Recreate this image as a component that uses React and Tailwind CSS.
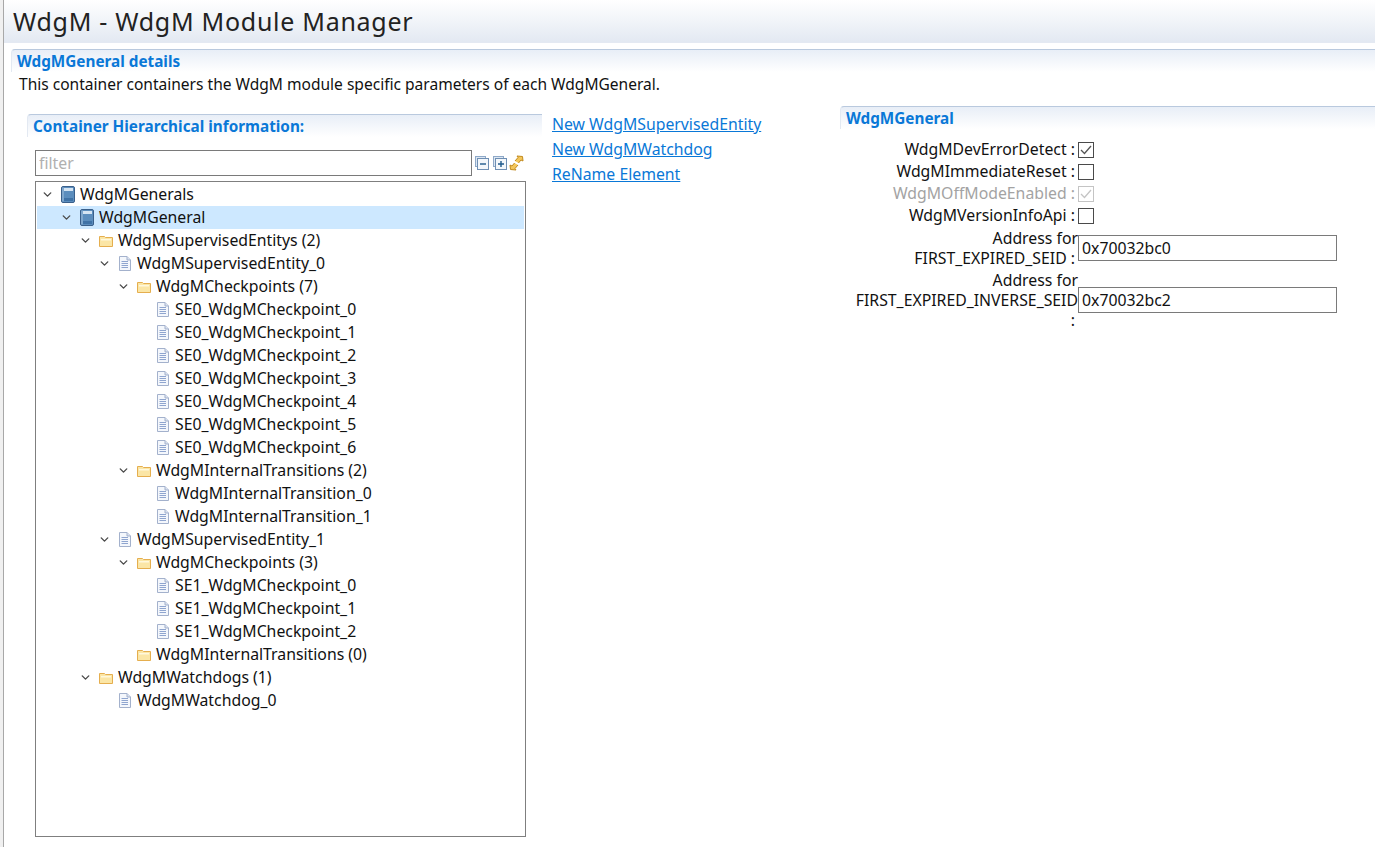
import { ChevronDown } from 'lucide-react';

const FONT = "font-['Noto_Sans','Open_Sans',sans-serif]";

const tree = [
  { depth: 0, label: 'WdgMGenerals', icon: 'book', open: true },
  { depth: 1, label: 'WdgMGeneral', icon: 'book', open: true, selected: true },
  { depth: 2, label: 'WdgMSupervisedEntitys (2)', icon: 'folder', open: true },
  { depth: 3, label: 'WdgMSupervisedEntity_0', icon: 'doc', open: true },
  { depth: 4, label: 'WdgMCheckpoints (7)', icon: 'folder', open: true },
  { depth: 5, label: 'SE0_WdgMCheckpoint_0', icon: 'doc' },
  { depth: 5, label: 'SE0_WdgMCheckpoint_1', icon: 'doc' },
  { depth: 5, label: 'SE0_WdgMCheckpoint_2', icon: 'doc' },
  { depth: 5, label: 'SE0_WdgMCheckpoint_3', icon: 'doc' },
  { depth: 5, label: 'SE0_WdgMCheckpoint_4', icon: 'doc' },
  { depth: 5, label: 'SE0_WdgMCheckpoint_5', icon: 'doc' },
  { depth: 5, label: 'SE0_WdgMCheckpoint_6', icon: 'doc' },
  { depth: 4, label: 'WdgMInternalTransitions (2)', icon: 'folder', open: true },
  { depth: 5, label: 'WdgMInternalTransition_0', icon: 'doc' },
  { depth: 5, label: 'WdgMInternalTransition_1', icon: 'doc' },
  { depth: 3, label: 'WdgMSupervisedEntity_1', icon: 'doc', open: true },
  { depth: 4, label: 'WdgMCheckpoints (3)', icon: 'folder', open: true },
  { depth: 5, label: 'SE1_WdgMCheckpoint_0', icon: 'doc' },
  { depth: 5, label: 'SE1_WdgMCheckpoint_1', icon: 'doc' },
  { depth: 5, label: 'SE1_WdgMCheckpoint_2', icon: 'doc' },
  { depth: 4, label: 'WdgMInternalTransitions (0)', icon: 'folder' },
  { depth: 2, label: 'WdgMWatchdogs (1)', icon: 'folder', open: true },
  { depth: 3, label: 'WdgMWatchdog_0', icon: 'doc' },
];

const BookIcon = () => (
  <svg width="14" height="17" viewBox="0 0 14 17">
    <rect x="0.5" y="0.5" width="13" height="16" rx="1.5" fill="#5b8dbd" stroke="#3a5f8a" />
    <rect x="3" y="2" width="9" height="3" fill="#d5e4f2" />
    <rect x="1.5" y="1.5" width="1" height="14" fill="#a3c2de" />
    <rect x="3" y="12" width="9" height="3" fill="#3f72a6" />
  </svg>
);

const FolderIcon = () => (
  <svg width="14" height="12" viewBox="0 0 14 12">
    <path d="M0.5 1.5 H5.5 L6.5 2.5 H13.5 V11.5 H0.5 Z" fill="#fbe6a6" stroke="#e5ae4e" />
    <rect x="2" y="4" width="10" height="1.5" fill="#fff8dc" />
  </svg>
);

const DocIcon = () => (
  <svg width="12" height="15" viewBox="0 0 12 15">
    <path d="M0.5 0.5 H8 L11.5 4 V14.5 H0.5 Z" fill="#f4f7fc" stroke="#a3b1cc" />
    <path d="M8 0.5 V4 H11.5" fill="#dbe3f1" stroke="#a3b1cc" />
    <path d="M2.5 5.5 H9 M2.5 7.5 H9 M2.5 9.5 H9 M2.5 11.5 H9" stroke="#8fa5cf" />
  </svg>
);

const icons = { book: <BookIcon />, folder: <FolderIcon />, doc: <DocIcon /> };

const TreeRow = ({ node }) => (
  <div
    className={`flex h-[23px] items-center ${node.selected ? 'bg-[#cde8ff]' : ''}`}
    style={{ paddingLeft: 5 + node.depth * 19 }}
  >
    <span className="flex w-[10px] justify-center">
      {node.open && <ChevronDown size={13} strokeWidth={2.6} className="shrink-0 text-[#4a4a4a]" />}
    </span>
    <span className="ml-[9px] flex w-[14px] justify-center">{icons[node.icon]}</span>
    <span className="ml-[5px] whitespace-nowrap text-[#111111]">{node.label}</span>
  </div>
);

const ToolbarIcons = () => (
  <div className="ml-[3px] flex items-center gap-[4px]">
    <svg width="14" height="14" viewBox="0 0 14 14">
      <rect x="0.5" y="0.5" width="10" height="10" fill="#dce7f3" stroke="#8fa9c8" />
      <rect x="2.5" y="2.5" width="11" height="11" fill="#f3f7fb" stroke="#6f8fb3" />
      <path d="M5 8 H11" stroke="#1f5a8c" strokeWidth="1.4" />
    </svg>
    <svg width="14" height="14" viewBox="0 0 14 14">
      <rect x="0.5" y="0.5" width="10" height="10" fill="#dce7f3" stroke="#8fa9c8" />
      <rect x="2.5" y="2.5" width="11" height="11" fill="#f3f7fb" stroke="#6f8fb3" />
      <path d="M5 8 H11 M8 5 V11" stroke="#1f5a8c" strokeWidth="1.4" />
    </svg>
    <svg width="15" height="16" viewBox="0 0 15 16" className="-ml-[2px]">
      <path d="M6 6 L9 2.5 L8 1 L13.5 1.5 L14 6 L12 5 L9.5 8" fill="#f3c65a" stroke="#c28a1e" />
      <path d="M9 10 L6 13.5 L7 15 L1.5 14.5 L1 10 L3 11 L5.5 8" fill="#f3c65a" stroke="#c28a1e" />
    </svg>
  </div>
);

const Section = ({ title, className, children }) => (
  <section className={className}>
    <div className="h-[23px] rounded-tl-[4px] border-t border-l border-t-[#b9c9de] border-l-[#e3e9f2] bg-gradient-to-b from-[#e8eef7] to-white">
      <h2 className="pl-[5px] text-[15.3px] font-bold leading-[22px] text-[#0a78d7]">{title}</h2>
    </div>
    {children}
  </section>
);

const CheckRow = ({ label, checked, disabled }) => (
  <div className="flex h-[22px] items-center justify-end">
    <span className={`mr-[3px] whitespace-nowrap ${disabled ? 'text-[#a3a3a3]' : 'text-[#111111]'}`}>{label} :</span>
    <span
      className={`mr-[281px] flex h-[16px] w-[16px] items-center justify-center border bg-white ${
        disabled ? 'border-[#c4c4c4]' : 'border-[#4a4a4a]'
      }`}
    >
      {checked && (
        <svg width="12" height="10" viewBox="0 0 12 10">
          <path d="M1 5 L4.5 8.5 L11 1" fill="none" stroke={disabled ? '#c4c4c4' : '#555555'} strokeWidth="1.3" />
        </svg>
      )}
    </span>
  </div>
);

const AddressRow = ({ lines, value, inputTop, className }) => (
  <div className={`flex items-start justify-end ${className}`}>
    <div className="w-[232px] text-right leading-[20px] text-[#111111]">
      {lines.map((line) => (
        <div key={line} className={line.endsWith(':') ? 'pr-[3px]' : ''}>
          {line}
        </div>
      ))}
    </div>
    <input
      readOnly
      value={value}
      className={`mr-[38px] h-[26px] w-[259px] border border-[#7a7a7a] px-[3px] text-[15.8px] text-[#111111] outline-none ${inputTop}`}
    />
  </div>
);

export default function App() {
  return (
    <div className={`flex h-[847px] w-[1375px] overflow-hidden bg-white text-[15.8px] ${FONT}`}>
      <div className="w-[4px] shrink-0 border-r border-[#a8a8a8] bg-[#f0f0f0]" />
      <main className="flex-1">
        <header className="h-[43px] border-b border-[#e4e9f2] bg-gradient-to-b from-white to-[#e3e9f2] pl-[9px] pt-[2px] text-[25px] leading-[38px] tracking-[0.72px] text-[#222222]">
          WdgM - WdgM Module Manager
        </header>

        <Section title="WdgMGeneral details" className="ml-[7px] mt-[6px]">
          <p className="mt-[1px] pl-[8px] text-[15.55px] leading-[22px] text-[#111111]">
            This container containers the WdgM module specific parameters of each WdgMGeneral.
          </p>
          <div className="mt-[19px] flex">
            <Section title="Container Hierarchical information:" className="ml-[16px] w-[515px]">
              <div className="ml-[8px] mt-[13px] flex items-center">
                <input
                  readOnly
                  placeholder="filter"
                  className="h-[26px] w-[437px] border border-[#7a7a7a] px-[3px] text-[15.8px] placeholder:text-[#b0b0b0] outline-none"
                />
                <ToolbarIcons />
              </div>
              <div className="ml-[8px] mt-[5px] h-[656px] w-[491px] border border-[#7f7f7f] p-[1px]">
                {tree.map((node, i) => (
                  <TreeRow key={i} node={node} />
                ))}
              </div>
            </Section>

            <nav className="-mt-[1px] ml-[10px] flex w-[288px] flex-col items-start gap-[3px] leading-[22px] text-[#0a78d7]">
              <a className="underline">New WdgMSupervisedEntity</a>
              <a className="underline">New WdgMWatchdog</a>
              <a className="underline">ReName Element</a>
            </nav>

            <Section title="WdgMGeneral" className="-mt-[8px] w-[535px]">
              <div className="mt-[10px]">
                <CheckRow label="WdgMDevErrorDetect" checked />
                <CheckRow label="WdgMImmediateReset" />
                <CheckRow label="WdgMOffModeEnabled" checked disabled />
                <CheckRow label="WdgMVersionInfoApi" />
              </div>
              <AddressRow
                lines={['Address for', 'FIRST_EXPIRED_SEID :']}
                value="0x70032bc0"
                inputTop="mt-[7px]"
                className="mt-[1px]"
              />
              <AddressRow
                lines={['Address for', 'FIRST_EXPIRED_INVERSE_SEID', ':']}
                value="0x70032bc2"
                inputTop="mt-[17px]"
                className="mt-[2px]"
              />
            </Section>
          </div>
        </Section>
      </main>
    </div>
  );
}
